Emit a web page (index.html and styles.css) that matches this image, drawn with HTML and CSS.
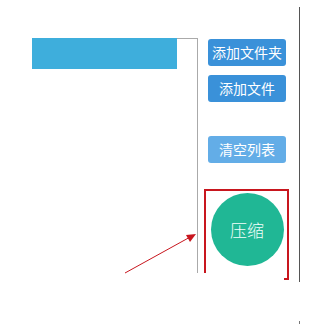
FILE: index.html
```html
<!DOCTYPE html>
<html lang="zh-CN">
<head>
<meta charset="utf-8">
<title>压缩</title>
<link rel="stylesheet" href="styles.css">
</head>
<body>
<div class="shot">
  <div class="window">
    <div class="content">
      <div class="list">
        <div class="progress"></div>
      </div>
      <div class="side">
        <button class="btn btn-folder">添加文件夹</button>
        <button class="btn btn-file">添加文件</button>
        <button class="btn btn-clear">清空列表</button>
        <button class="compress">压缩</button>
      </div>
    </div>
  </div>
  <div class="tick"></div>
  <svg class="annot" width="319" height="324" viewBox="0 0 319 324">
    <path d="M205 273 V190 H288 V279 H284" fill="none" stroke="#c8161e" stroke-width="2"/>
    <line x1="125" y1="273" x2="192" y2="236" stroke="#c8161e" stroke-width="1"/>
    <polygon points="196,234 186,235 190,242" fill="#c8161e"/>
  </svg>
</div>
</body>
</html>
```
FILE: styles.css
```css
html, body {
  margin: 0;
  padding: 0;
  background: #fff;
}
body {
  width: 319px;
  height: 324px;
  overflow: hidden;
  font-family: "Noto Sans CJK SC", "Noto Sans", sans-serif;
}
.shot {
  position: relative;
  display: flow-root;
  width: 319px;
  height: 324px;
}
.window {
  margin-top: 7px;
  width: 299px;
  height: 275px;
  border-right: 1px solid #555;
}
.content {
  height: 266px;
  overflow: hidden;
  box-sizing: border-box;
  padding: 31px 0 0 32px;
  display: flex;
  align-items: flex-start;
}
.list {
  width: 165px;
  height: 300px;
  border-top: 1px solid #aaa;
  border-right: 1px solid #aaa;
  flex: none;
}
.progress {
  width: 145px;
  height: 31px;
  margin-top: -1px;
  background: #3eaedc;
}
.side {
  margin-left: 10px;
  width: 78px;
  display: flex;
  flex-direction: column;
  flex: none;
}
.btn {
  display: block;
  width: 78px;
  height: 27px;
  padding: 0;
  border: none;
  border-radius: 3px;
  background: #3a91d9;
  color: #fff;
  font-family: inherit;
  font-size: 14px;
  line-height: 27px;
  text-align: center;
}
.btn-folder { margin-top: 1px; }
.btn-file { margin-top: 9px; }
.btn-clear {
  margin-top: 34px;
  background: #63ade7;
}
.compress {
  margin-top: 30px;
  align-self: center;
  width: 73px;
  height: 73px;
  padding: 0;
  border: none;
  border-radius: 50%;
  background: #20b795;
  color: #f2fffb;
  font-family: inherit;
  font-size: 17px;
  font-weight: 300;
}
.tick {
  margin-top: 39px;
  margin-left: 299px;
  width: 1px;
  height: 3px;
  background: #777;
}
.annot {
  position: absolute;
  left: 0;
  top: 0;
  pointer-events: none;
}
```
